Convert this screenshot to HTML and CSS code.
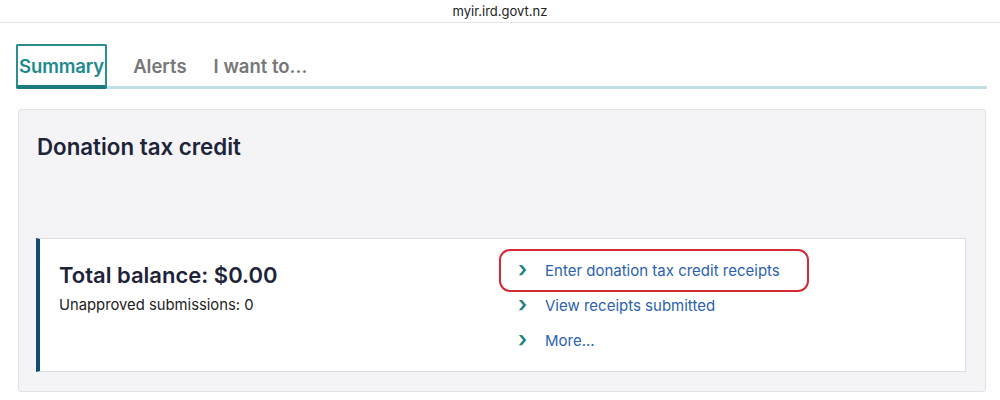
FILE: index.html
```html
<!DOCTYPE html>
<html lang="en">

<head>
    <meta charset="UTF-8">
    <meta name="viewport" content="width=device-width, initial-scale=1.0">
    <title>Donation tax credit</title>
    <link rel="stylesheet" href="styles.css">
</head>

<body>
    <!-- Barra de direccion -->
    <div class="address-bar">myir.ird.govt.nz</div>

    <!-- Pestanas -->
    <nav class="tabs">
        <a class="tab active" href="#">Summary</a>
        <a class="tab" href="#">Alerts</a>
        <a class="tab" href="#">I want to...</a>
    </nav>

    <!-- Tarjeta principal -->
    <section class="card">
        <h2 class="card-title">Donation tax credit</h2>

        <div class="balance-box">
            <div class="balance">
                <h3 class="balance-total">Total balance: $0.00</h3>
                <p class="balance-note">Unapproved submissions: 0</p>
            </div>
            <ul class="links">
                <li class="highlight"><span class="chevron">&rsaquo;</span><a href="#">Enter donation tax credit receipts</a></li>
                <li><span class="chevron">&rsaquo;</span><a href="#">View receipts submitted</a></li>
                <li><span class="chevron">&rsaquo;</span><a href="#">More...</a></li>
            </ul>
        </div>
    </section>
</body>

</html>
```

FILE: styles.css
```css
* {
    box-sizing: border-box;
}

body {
    margin: 0;
    background-color: #fefefe;
    font-family: Inter, "Noto Sans", sans-serif;
    color: #1d2439;
}

/* Barra de direccion */
.address-bar {
    height: 23px;
    line-height: 22px;
    text-align: center;
    font-size: 13px;
    color: #222;
    border-bottom: 1px solid #e6e6e6;
}

/* Pestanas */
.tabs {
    display: flex;
    align-items: flex-end;
    margin: 21px 13px 0 16px;
    border-bottom: 3px solid #bfe0e2;
}

.tab {
    display: block;
    margin-right: 27px;
    height: 42px;
    line-height: 44px;
    font-size: 18.5px;
    font-weight: 600;
    color: #777;
    text-decoration: none;
}

.tab.active {
    padding: 0 1px 0 1px;
    color: #1d8a8c;
    border: 2px solid #2a8f92;
    border-bottom: 4px solid #1b7b7f;
    border-radius: 2px;
    margin-bottom: -3px;
    margin-right: 26px;
    height: 45px;
    line-height: 41px;
    letter-spacing: -0.1px;
}

/* Tarjeta */
.card {
    margin: 20px 14px 0 18px;
    padding: 22px 19px 19px 17px;
    background-color: #f4f4f7;
    border: 1px solid #e2e2e6;
    border-radius: 3px;
}

.card-title {
    margin: 0 0 76px 1px;
    font-size: 22.3px;
    font-weight: 600;
    line-height: 30px;
}

.balance-box {
    display: flex;
    background: white;
    border: 1px solid #dcdce1;
    border-left: 4px solid #114d72;
}

.balance {
    width: 463px;
    padding: 22px 0 0 19px;
}

.balance-total {
    margin: 0;
    font-size: 22px;
    font-weight: 600;
    line-height: 28px;
}

.balance-note {
    margin: 6px 0 0;
    font-size: 14.8px;
    line-height: 20px;
    color: #222;
}

.links {
    list-style: none;
    margin: 0;
    padding: 14px 0 13px;
}

.links li {
    display: flex;
    align-items: center;
    width: 302px;
    height: 35px;
    padding-left: 15px;
    border-radius: 7px;
}

.links li.highlight {
    outline: 2px solid #d42a36;
    outline-offset: 2px;
}

.chevron {
    width: 27px;
    font-size: 22px;
    font-weight: 600;
    color: #1d7f82;
    line-height: 20px;
    padding-bottom: 3px;
}

.links a {
    font-size: 15px;
    color: #2b62b0;
    text-decoration: none;
}
```
